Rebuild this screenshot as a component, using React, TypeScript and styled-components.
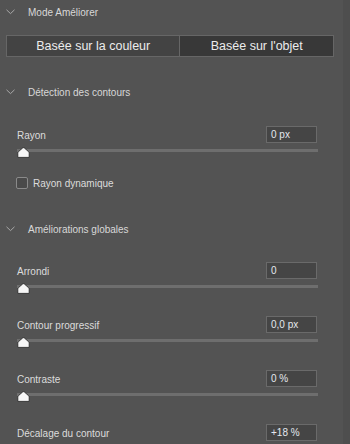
import React from "react";
import styled, { createGlobalStyle } from "styled-components";

const GlobalStyle = createGlobalStyle`
    html, body {
        margin: 0;
        padding: 0;
        background: #535353;
    }
    body {
        font-family: "Liberation Sans", Arial, sans-serif;
        font-size: 10px;
        color: #dadada;
    }
`;

interface FieldData {
    label: string,
    value: string,
    slider: boolean,
    gap: number
};

const detection: FieldData[] = [
    {label: 'Rayon', value: '0 px', slider: true, gap: 22}
];

const globales: FieldData[] = [
    {label: 'Arrondi', value: '0', slider: true, gap: 21},
    {label: 'Contour progressif', value: '0,0 px', slider: true, gap: 23},
    {label: 'Contraste', value: '0 %', slider: true, gap: 23},
    {label: 'Décalage du contour', value: '+18 %', slider: false, gap: 23}
];

const Chevron = () => (
    <svg width="9" height="6" viewBox="0 0 9 6">
        <polyline points="0.5,0.8 4.5,4.6 8.5,0.8" fill="none" stroke="#a8a8a8" strokeWidth="1"/>
    </svg>
);

const Thumb = () => (
    <svg width="13" height="11" viewBox="0 0 13 11">
        <path d="M0.8 10.4 L0.8 6.2 Q0.8 5.2 1.6 4.5 L5.6 1 Q6.5 0.3 7.4 1 L11.4 4.5 Q12.2 5.2 12.2 6.2 L12.2 10.4 Z"
              fill="#f6f6f6" stroke="#2a2a2a" strokeWidth="0.9"/>
    </svg>
);

const Field : React.FC<{field: FieldData}> = ({field}) => (
    <FieldBlock $gap={field.gap}>
        <FieldRow>
            <FieldLabel>{field.label}</FieldLabel>
            <ValueBox>{field.value}</ValueBox>
        </FieldRow>
        {
            field.slider &&
            <SliderWrap>
                <Track/>
                <ThumbHolder><Thumb/></ThumbHolder>
            </SliderWrap>
        }
    </FieldBlock>
);

const App = () => {
    return (
        <>
            <GlobalStyle/>
            <Page>
                <Panel>
                    <SectionHeader $top={0}>
                        <Chevron/>
                        <HeaderTitle>Mode Améliorer</HeaderTitle>
                    </SectionHeader>

                    <Segmented>
                        <SegButton $active={false}>Basée sur la couleur</SegButton>
                        <SegButton $active={true}>Basée sur l'objet</SegButton>
                    </Segmented>

                    <SectionHeader $top={23}>
                        <Chevron/>
                        <HeaderTitle>Détection des contours</HeaderTitle>
                    </SectionHeader>

                    {detection.map(f => <Field key={f.label} field={f}/>)}

                    <CheckRow>
                        <CheckBox/>
                        <span>Rayon dynamique</span>
                    </CheckRow>

                    <SectionHeader $top={27}>
                        <Chevron/>
                        <HeaderTitle>Améliorations globales</HeaderTitle>
                    </SectionHeader>

                    {globales.map(f => <Field key={f.label} field={f}/>)}
                </Panel>
                <ScrollStrip/>
            </Page>
        </>
    )
}

const Page = styled.div`
    display: flex;
    width: 350px;
    height: 444px;
    overflow: hidden;
    background: #535353;
`;

const Panel = styled.div`
    flex: 1;
    display: flex;
    flex-direction: column;
`;

const ScrollStrip = styled.div`
    width: 7px;
    background: #4e4e4e;
`;

const SectionHeader = styled.div<{$top: number}>`
    display: flex;
    align-items: center;
    height: 24px;
    margin-top: ${p => p.$top}px;
    padding-left: 6px;
    gap: 13px;
    svg {
        margin-top: -1px;
    }
`;

const HeaderTitle = styled.span`
    font-size: 10px;
    color: #d8d8d8;
`;

const Segmented = styled.div`
    display: flex;
    margin: 11px 0 0 6px;
    width: 328px;
    height: 22px;
    box-sizing: border-box;
    border: 1px solid #666;
`;

const SegButton = styled.div<{$active: boolean}>`
    display: flex;
    align-items: center;
    justify-content: center;
    width: ${p => p.$active ? 154 : 173}px;
    background: ${p => p.$active ? '#383838' : '#434343'};
    border-left: ${p => p.$active ? '1px solid #666' : 'none'};
    font-size: 12.5px;
    color: #ececec;
    padding-bottom: 1px;
    box-sizing: border-box;
`;

const FieldBlock = styled.div<{$gap: number}>`
    margin-top: ${p => p.$gap}px;
    padding-left: 17px;
    width: 301px;
`;

const FieldRow = styled.div`
    display: flex;
    align-items: center;
    justify-content: space-between;
    height: 17px;
`;

const FieldLabel = styled.span`
    font-size: 10px;
    color: #dcdcdc;
    padding-top: 2px;
`;

const ValueBox = styled.div`
    width: 51px;
    height: 17px;
    box-sizing: border-box;
    border: 1px solid #6a6a6a;
    background: #454545;
    color: #e4e8ee;
    font-size: 10px;
    padding: 2px 0 0 4px;
    margin-right: 1px;
`;

const SliderWrap = styled.div`
    position: relative;
    height: 10px;
    margin-top: 4px;
`;

const Track = styled.div`
    position: absolute;
    left: 0;
    right: 0;
    top: 2px;
    height: 3px;
    background: #6e6e6e;
`;

const ThumbHolder = styled.div`
    position: absolute;
    left: 0;
    top: 0;
    line-height: 0;
`;

const CheckRow = styled.div`
    display: flex;
    align-items: center;
    gap: 5px;
    margin-top: 19px;
    padding-left: 16px;
    height: 14px;
    font-size: 10px;
    color: #dcdcdc;
`;

const CheckBox = styled.div`
    width: 10px;
    height: 10px;
    border: 1px solid #8a8a8a;
    border-radius: 2px;
    background: #4a4a4a;
`;

export default App;
